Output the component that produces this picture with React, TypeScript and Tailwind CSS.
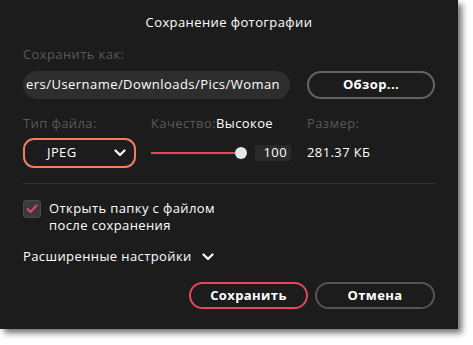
import React from "react";

const Chevron = ({ className = "" }: { className?: string }) => (
  <svg width="12" height="8" viewBox="0 0 12 8" className={className}>
    <path d="M1.5 1.5 L6 6 L10.5 1.5" fill="none" stroke="#ffffff" strokeWidth="2.2" strokeLinecap="round" strokeLinejoin="round" />
  </svg>
);

export default function App() {
  return (
    <div className="w-[473px] h-[345px] bg-white relative" style={{ fontFamily: '"Open Sans", "DejaVu Sans", sans-serif' }}>
      <div className="w-[458px] h-[329px] bg-[#1c1c1c] shadow-[4px_4px_6px_rgba(0,0,0,0.55)] px-[23px] flex flex-col text-[13px] tracking-[0.4px]">
        <div className="h-[46px] flex items-center justify-center text-white">Сохранение фотографии</div>
        <div className="h-[18px] flex items-center text-[#595959]">Сохранить как:</div>
        <div className="mt-[7px] flex gap-[17px] h-[28px]">
          <div className="w-[267px] h-[28px] rounded-full bg-[#2e2e2e] overflow-hidden flex items-center justify-end pr-[10px] whitespace-nowrap text-white tracking-[0.45px]">
            ers/Username/Downloads/Pics/Woman
          </div>
          <button className="w-[128px] h-[28px] rounded-full border-2 border-[#646464] text-white font-bold flex items-center justify-center">
            Обзор...
          </button>
        </div>
        <div className="mt-[16px] h-[18px] flex items-center">
          <div className="w-[128px] text-[#595959]">Тип файла:</div>
          <div className="w-[156px] flex">
            <span className="text-[#595959]">Качество:</span>
            <span className="text-white">Высокое</span>
          </div>
          <div className="text-[#595959]">Размер:</div>
        </div>
        <div className="mt-[5px] h-[30px] flex items-center">
          <div className="w-[128px]">
            <div className="w-[113px] h-[30px] rounded-[11px] border-2 border-[#e9825f] flex items-center justify-between pl-[22px] pr-[8px] text-white">
              <span>JPEG</span>
              <Chevron />
            </div>
          </div>
          <div className="w-[156px] flex items-center">
            <div className="relative w-[96px] h-[14px] flex items-center">
              <div className="w-[90px] h-[2px] bg-[#e5485a]" />
              <div className="absolute left-[84px] top-[1px] w-[12px] h-[12px] rounded-full bg-[#e5e7eb]" />
            </div>
            <div className="ml-[8px] w-[36px] h-[16px] bg-[#2a2a2a] rounded-[2px] flex items-center justify-end pr-[4px] text-white">100</div>
          </div>
          <div className="text-white">281.37 КБ</div>
        </div>
        <div className="mt-[15px] h-px bg-[#333333]" />
        <div className="mt-[16px] flex">
          <div className="w-[18px] h-[18px] rounded-[3px] bg-[#3a3a3a] border border-[#4a4a4a] flex items-center justify-center">
            <svg width="12" height="10" viewBox="0 0 12 10">
              <path d="M1.5 5 L4.5 8 L10.5 1.5" fill="none" stroke="#e5485a" strokeWidth="2" strokeLinecap="round" strokeLinejoin="round" />
            </svg>
          </div>
          <div className="ml-[8px] text-white leading-[17px]">
            <div>Открыть папку с файлом</div>
            <div>после сохранения</div>
          </div>
        </div>
        <div className="mt-[14px] h-[18px] flex items-center text-white gap-[10px]">
          <span>Расширенные настройки</span>
          <Chevron />
        </div>
        <div className="mt-[16px] flex justify-end gap-[7px]">
          <button className="w-[119px] h-[27px] rounded-full border-2 border-[#e5485a] text-white font-bold flex items-center justify-center">Сохранить</button>
          <button className="w-[120px] h-[27px] rounded-full border-2 border-[#555555] text-white font-bold flex items-center justify-center">Отмена</button>
        </div>
      </div>
    </div>
  );
}
